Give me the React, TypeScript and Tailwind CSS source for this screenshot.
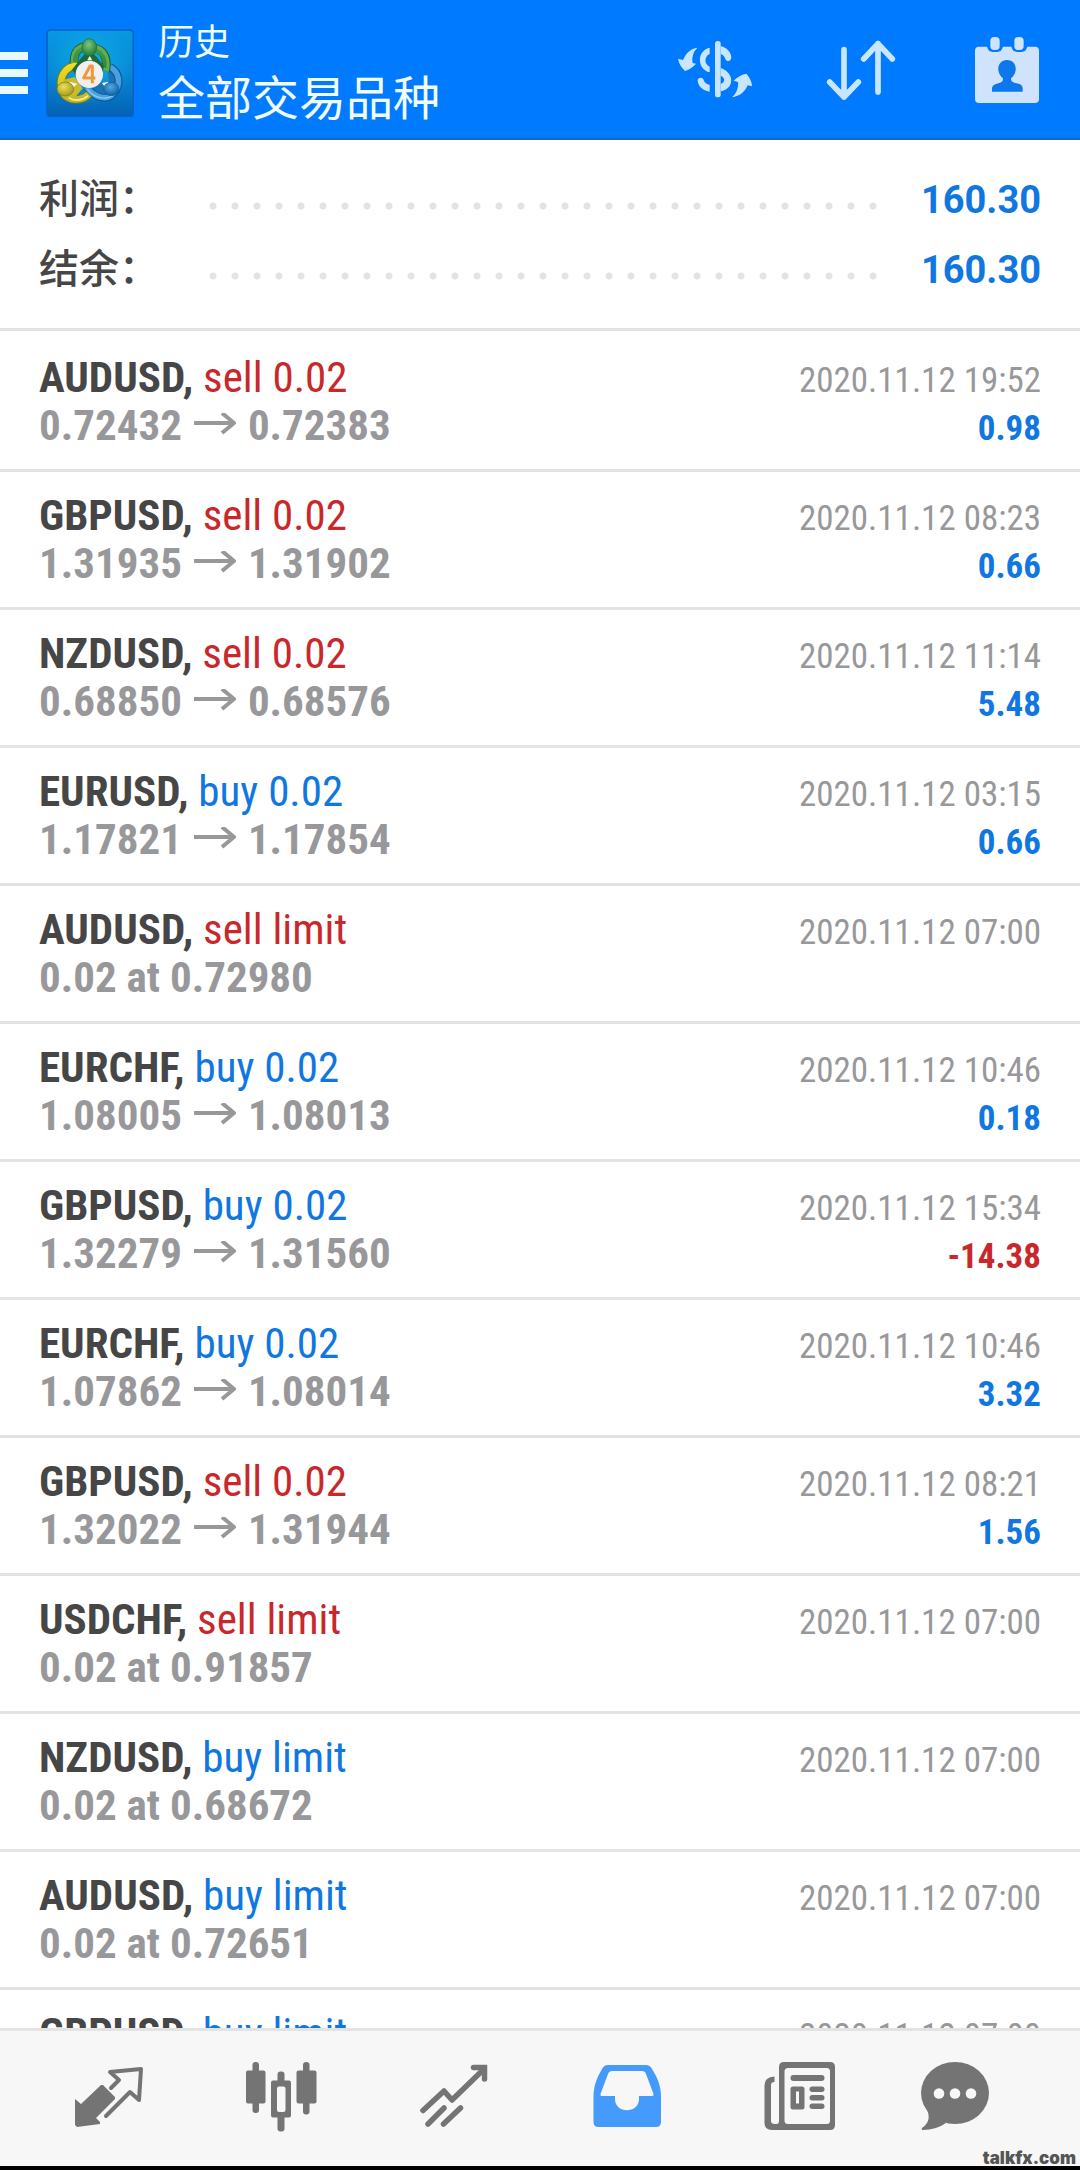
import React from 'react';

interface Deal {
  symbol: string;
  side: 'buy' | 'sell';
  volume: string;
  from?: string;
  to?: string;
  detail?: string;
  time: string;
  profit?: string;
}

const deals: Deal[] = [
  { symbol: 'AUDUSD', side: 'sell', volume: '0.02', from: '0.72432', to: '0.72383', time: '2020.11.12 19:52', profit: '0.98' },
  { symbol: 'GBPUSD', side: 'sell', volume: '0.02', from: '1.31935', to: '1.31902', time: '2020.11.12 08:23', profit: '0.66' },
  { symbol: 'NZDUSD', side: 'sell', volume: '0.02', from: '0.68850', to: '0.68576', time: '2020.11.12 11:14', profit: '5.48' },
  { symbol: 'EURUSD', side: 'buy', volume: '0.02', from: '1.17821', to: '1.17854', time: '2020.11.12 03:15', profit: '0.66' },
  { symbol: 'AUDUSD', side: 'sell', volume: 'limit', detail: '0.02 at 0.72980', time: '2020.11.12 07:00' },
  { symbol: 'EURCHF', side: 'buy', volume: '0.02', from: '1.08005', to: '1.08013', time: '2020.11.12 10:46', profit: '0.18' },
  { symbol: 'GBPUSD', side: 'buy', volume: '0.02', from: '1.32279', to: '1.31560', time: '2020.11.12 15:34', profit: '-14.38' },
  { symbol: 'EURCHF', side: 'buy', volume: '0.02', from: '1.07862', to: '1.08014', time: '2020.11.12 10:46', profit: '3.32' },
  { symbol: 'GBPUSD', side: 'sell', volume: '0.02', from: '1.32022', to: '1.31944', time: '2020.11.12 08:21', profit: '1.56' },
  { symbol: 'USDCHF', side: 'sell', volume: 'limit', detail: '0.02 at 0.91857', time: '2020.11.12 07:00' },
  { symbol: 'NZDUSD', side: 'buy', volume: 'limit', detail: '0.02 at 0.68672', time: '2020.11.12 07:00' },
  { symbol: 'AUDUSD', side: 'buy', volume: 'limit', detail: '0.02 at 0.72651', time: '2020.11.12 07:00' },
  { symbol: 'GBPUSD', side: 'buy', volume: 'limit', time: '2020.11.12 07:00' },
];

const summary = [
  { label: '利润', value: '160.30' },
  { label: '结余', value: '160.30' },
];

function Logo() {
  return (
    <svg viewBox="138 84 264 264" className="h-22 w-22 shrink-0" aria-hidden="true">
      <defs>
        <linearGradient id="tile" x1="0" y1="0" x2="0" y2="1">
          <stop offset="0" stopColor="#0899e2" />
          <stop offset="0.5" stopColor="#0788d4" />
          <stop offset="1" stopColor="#0561b4" />
        </linearGradient>
        <radialGradient id="glow" cx="0.5" cy="0.4" r="0.5">
          <stop offset="0" stopColor="#12b4e8" stopOpacity="0.8" />
          <stop offset="1" stopColor="#12b4e8" stopOpacity="0" />
        </radialGradient>
        <linearGradient id="green" x1="0" y1="0" x2="0" y2="1">
          <stop offset="0" stopColor="#3f9a4c" />
          <stop offset="1" stopColor="#2c8b3a" />
        </linearGradient>
        <linearGradient id="yellow" x1="0" y1="0" x2="0" y2="1">
          <stop offset="0" stopColor="#f0dc20" />
          <stop offset="1" stopColor="#c3b52c" />
        </linearGradient>
        <radialGradient id="headGreen" cx="0.45" cy="0.35" r="0.6">
          <stop offset="0" stopColor="#7fc47e" />
          <stop offset="1" stopColor="#24843c" />
        </radialGradient>
        <radialGradient id="headYellow" cx="0.4" cy="0.35" r="0.65">
          <stop offset="0" stopColor="#ece05a" />
          <stop offset="1" stopColor="#a59a1c" />
        </radialGradient>
        <radialGradient id="headBlue" cx="0.45" cy="0.35" r="0.65">
          <stop offset="0" stopColor="#56a8e0" />
          <stop offset="1" stopColor="#0a62a8" />
        </radialGradient>
      </defs>
      <rect x="141" y="87" width="259" height="260" rx="11" fill="url(#tile)" stroke="#0862c4" strokeWidth="5" />
      <rect x="146" y="92" width="249" height="250" fill="url(#glow)" />
      <path d="M322 194c34 14 42 50 24 80-22 26-60 22-88-14l10-20 60 8z" fill="#1c74b4" />
      <path d="M330 198c30 16 34 54 10 80-18 20-54 16-80-20" fill="none" stroke="#075a9c" strokeWidth="24" />
      <path d="M330 198c30 16 34 54 10 80-18 20-54 16-80-20" fill="none" stroke="#4aa0dc" strokeWidth="17" />
      <path d="M262 264c20 28 56 36 82 16" fill="none" stroke="#8cc8ee" strokeWidth="4" />
      <path d="M236 192c-44 3-63 41-48 82 17 29 60 26 78 6" fill="none" stroke="#6f7a1e" strokeWidth="26" />
      <path d="M236 192c-44 3-63 41-48 82 17 29 60 26 78 6" fill="none" stroke="url(#yellow)" strokeWidth="20" />
      <path d="M206 290c18 12 44 8 58-6" fill="none" stroke="#f4ee9a" strokeWidth="5" />
      <path d="M222 186c-2-52 40-56 48-40 25-14 58 13 47 63" fill="none" stroke="#1c5d2e" strokeWidth="26" />
      <path d="M222 186c-2-52 40-56 48-40 25-14 58 13 47 63" fill="none" stroke="#62ad4e" strokeWidth="20" />
      <path d="M224 182c2-38 28-46 46-29 24-13 49 12 44 47" fill="none" stroke="url(#green)" strokeWidth="11" />
      <path d="M246 168l22-22 22 22 22 28-8 36h-70l-18-26z" fill="#1f6a36" />
      <path d="M190 236l34-8 24 34-22 26-24-6z" fill="#c9bb2a" />
      <path d="M262 178l7-14 8 14zM208 242l24 6-20 18zM306 246l20-4-10 18z" fill="#f4f8e6" />
      <ellipse cx="268" cy="139" rx="22" ry="26" fill="url(#headGreen)" stroke="#1c6a38" strokeWidth="2" />
      <ellipse cx="196" cy="264" rx="25" ry="21" fill="url(#headYellow)" stroke="#6f7a1e" strokeWidth="2" />
      <ellipse cx="334" cy="264" rx="23" ry="20" fill="url(#headBlue)" stroke="#075a9c" strokeWidth="2" />
      <circle cx="268" cy="220" r="41" fill="#f1eff0" />
      <path d="M277 247V195h-7l-19 36h35" fill="none" stroke="#f0983c" strokeWidth="9" strokeLinejoin="round" />
    </svg>
  );
}

function CurrencyIcon() {
  return (
    <svg viewBox="96 90 240 240" className="h-20 w-20" fill="#c8e6ff" aria-hidden="true">
      <rect x="225" y="126" width="17" height="169" rx="8" />
      <path d="M209 146v19c-17 7-17 31 0 38v17c-38-9-40-65 0-74z" />
      <path d="M242 142c18 3 31 17 32 33 0 13-14 15-18 5-2-7-6-12-14-15zM242 207c42 14 43 62 0 70zM242 230v25c14-5 14-19 0-25z" fillRule="evenodd" />
      <path d="M173 243c3-9 15-9 18 0 2 8 8 12 18 15v20c-22-3-36-18-36-35z" />
      <path d="M173 146c-14 10-18 32-15 46l10 2c-8 9-19 17-33 22-11-10-19-24-21-37l15 4c8-20 23-35 44-37z" />
      <path d="M276 295c13-11 20-29 18-46l-13-4c9-10 22-18 38-21 11 11 17 26 17 38l-13-3c-8 19-23 33-47 36z" />
    </svg>
  );
}

function SortIcon() {
  return (
    <svg viewBox="540 90 240 240" className="h-20 w-20" fill="none" stroke="#c8e6ff" strokeWidth="17" strokeLinecap="round" strokeLinejoin="round" aria-hidden="true">
      <path d="M612 152v142M569 249l43 45 43-45M714 279V134M671 180l43-46 43 46" />
    </svg>
  );
}

function CalendarIcon() {
  return (
    <svg viewBox="984 90 240 240" className="h-20 w-20" aria-hidden="true">
      <rect x="1005" y="143" width="192" height="169" rx="12" fill="#cfe3fd" />
      <rect x="1041" y="112" width="48" height="47" rx="18" fill="#007aff" />
      <rect x="1114" y="112" width="48" height="47" rx="18" fill="#007aff" />
      <rect x="1051" y="114" width="28" height="39" rx="12" fill="#cfe3fd" />
      <rect x="1123" y="114" width="28" height="39" rx="12" fill="#cfe3fd" />
      <path d="M1101 183c19 0 28 15 26 31-2 12-8 20-14 24 0 8 3 11 10 13 15 4 25 6 25 18v9h-92v-9c0-12 11-14 24-18 7-2 9-5 9-13-6-4-12-12-14-24-2-16 8-31 26-31z" fill="#0c78ec" />
    </svg>
  );
}

function QuotesIcon() {
  return (
    <svg viewBox="0 0 72 72" className="h-18 w-18" aria-hidden="true">
      <path d="M3 37l6 5 20-19h2l12 12v2L24 56l4 4v2L5 65l-2-2z" fill="#747474" />
      <path d="M39 26l8-8-9-8 31-3-2 31-9-8-24 24" fill="none" stroke="#747474" strokeWidth="4" strokeLinejoin="round" strokeLinecap="round" />
    </svg>
  );
}

function ChartIcon() {
  return (
    <svg viewBox="0 0 72 72" className="h-18 w-18" fill="#747474" aria-hidden="true">
      <rect x="7.5" y="0" width="6.5" height="51" rx="3" />
      <rect x="1" y="8.5" width="19.5" height="33" rx="2" />
      <rect x="58" y="0" width="6.5" height="52.5" rx="3" />
      <rect x="51.5" y="8.5" width="20" height="33" rx="2" />
      <rect x="32.5" y="9.5" width="7" height="60" rx="3" />
      <rect x="26" y="18.5" width="20" height="37" rx="2" />
      <rect x="32" y="24.5" width="8.5" height="25.5" rx="2" fill="#f7f7f7" />
    </svg>
  );
}

function TradeIcon() {
  return (
    <svg viewBox="0 0 72 72" className="h-18 w-18" fill="none" stroke="#747474" strokeWidth="5.5" strokeLinecap="round" aria-hidden="true">
      <path d="M5 48.5L26 29l8 9L66 7M10 62l16-16M25.5 62l17-16" strokeLinejoin="round" />
      <path d="M55.5 5.5h11V17" />
    </svg>
  );
}

function HistoryIcon() {
  return (
    <svg viewBox="0 0 72 72" className="h-18 w-18" fill="#459bfc" aria-hidden="true">
      <path fillRule="evenodd" d="M17 3h38q4 0 6 4c6 9 9 18 9 28v25q0 5-5 5H7.5q-5 0-5-5V35c0-10 3-19 8.5-28q2-4 6-4zM21 9q-3 0-4 3L9.5 32q-.5 2 2 2H24v3c0 15 24 15 24 0v-3h13q2 0 1.500-2L55 12q-1-3-4-3z" />
    </svg>
  );
}

function NewsIcon() {
  return (
    <svg viewBox="0 0 72 72" className="h-18 w-18" fill="#747474" aria-hidden="true">
      <path fillRule="evenodd" d="M20 0h46q5 0 5 5v58q0 5-5 5H8q-7.5 0-7.5-7V23q0-8 10-8.500v5.500q-3.500 0-3.500 3v36q0 3 4 3h1.500q2.500 0 2.500-3V5q0-5 5-5zM24 6q-3.500 0-3.500 3.500v49q0 3.500 3.500 3.500h39q3 0 3-3.500v-49q0-3.500-3-3.500z" />
      <rect x="26.5" y="13" width="34" height="6" rx="3" />
      <path fillRule="evenodd" d="M29 24.500h9q2.500 0 2.500 2.500v18q0 2.500-2.500 2.500h-9q-2.500 0-2.500-2.500V27q0-2.500 2.500-2.500zM32 29.500v12h3v-12z" />
      <rect x="45.5" y="24.5" width="15" height="5.5" rx="2.75" />
      <rect x="45.5" y="33" width="15" height="5.5" rx="2.75" />
      <rect x="45.5" y="41.5" width="15" height="5.5" rx="2.75" />
    </svg>
  );
}

function ChatIcon() {
  return (
    <svg viewBox="0 0 72 72" className="h-18 w-18" fill="#747474" aria-hidden="true">
      <ellipse cx="36" cy="31" rx="34" ry="31" />
      <path d="M8 48q5 11-5 18-1 2 1 2 13 0 23-7z" />
      <g fill="#f7f7f7">
        <circle cx="20" cy="31.5" r="5.3" />
        <circle cx="36" cy="31.5" r="5.3" />
        <circle cx="52" cy="31.5" r="5.3" />
      </g>
    </svg>
  );
}

function PriceArrow() {
  return (
    <svg viewBox="0 0 44 24" className="h-6 w-11" fill="none" stroke="#98989b" strokeWidth="4" strokeLinejoin="round" role="img" aria-label="→">
      <path d="M1 10h40M29 0l12 10-12 10" />
    </svg>
  );
}

const tabs = [
  { name: 'Quotes', icon: <QuotesIcon /> },
  { name: 'Chart', icon: <ChartIcon /> },
  { name: 'Trade', icon: <TradeIcon /> },
  { name: 'History', icon: <HistoryIcon /> },
  { name: 'News', icon: <NewsIcon /> },
];

function DealRow({ deal }: { deal: Deal }) {
  return (
    <li className="flex h-[138px] shrink-0 justify-between border-b-3 border-[#e3e3e3] px-[39px] pt-[19px] font-['Roboto_Condensed','Liberation_Sans_Narrow',Roboto,sans-serif]">
      <div className="text-[43px] leading-12 whitespace-nowrap">
        <p>
          <span className="font-bold text-[#464646]">{deal.symbol},</span>{' '}
          <span className={deal.side === 'sell' ? 'text-[#c8282c]' : 'text-[#1177e0]'}>{deal.side} {deal.volume}</span>
        </p>
        {deal.detail && <p className="font-bold text-[#98989b]">{deal.detail}</p>}
        {deal.from && (
          <p className="flex items-center gap-[11px] font-bold text-[#98989b]">{deal.from}<PriceArrow />{deal.to}</p>
        )}
      </div>
      <div className="pt-1 text-right text-[35px] leading-12 whitespace-nowrap">
        <p className="text-[#98989b]">{deal.time}</p>
        {deal.profit && (
          <p className={deal.profit.startsWith('-') ? 'font-bold text-[#c8282c]' : 'font-bold text-[#1177e0]'}>{deal.profit}</p>
        )}
      </div>
    </li>
  );
}

export default function App() {
  return (
    <div className="relative flex h-screen flex-col overflow-hidden bg-white font-[Roboto,'Noto_Sans_CJK_SC',sans-serif]">
      <header className="flex h-[140px] shrink-0 items-center border-b-2 border-[#1668c8] bg-[#007aff] pt-1 pr-8 text-[#f0fcff]">
        <button aria-label="Menu" className="mt-1 mr-[18px] flex flex-col gap-[9px]">
          <span className="h-2 w-7 bg-[#e8f8ff]" />
          <span className="h-2 w-7 bg-[#e8f8ff]" />
          <span className="h-2 w-7 bg-[#e8f8ff]" />
        </button>
        <span className="pt-1"><Logo /></span>
        <div className="ml-6 flex-1 pt-2 whitespace-nowrap">
          <p className="text-[36px] leading-12">历史</p>
          <h1 className="text-[47px] leading-16">全部交易品种</h1>
        </div>
        <div className="flex gap-17 pb-1">
          <button aria-label="Symbols"><CurrencyIcon /></button>
          <button aria-label="Sort"><SortIcon /></button>
          <button aria-label="Period"><CalendarIcon /></button>
        </div>
      </header>

      <main className="flex min-h-0 flex-1 flex-col overflow-hidden">
        <dl className="flex h-[191px] shrink-0 flex-col border-b-3 border-[#e3e3e3] px-[39px] pt-[25px]">
          {summary.map(row => (
            <div key={row.label} className="flex h-[70px] items-center">
              <dt className="text-[40px] font-medium text-[#464646]">{row.label}：</dt>
              <dd className="flex flex-1 items-center">
                <span className="mt-3 mr-10 ml-[43px] h-2 flex-1 bg-[radial-gradient(circle,#e3e3e3_3px,transparent_4px)] bg-[size:22px_8px]" />
                <span className="text-[38px] font-bold text-[#1177e0]">{row.value}</span>
              </dd>
            </div>
          ))}
        </dl>
        <ul className="flex flex-col pt-[3px]">
          {deals.map((deal, i) => <DealRow key={i} deal={deal} />)}
        </ul>
      </main>

      <nav className="flex h-[142px] shrink-0 items-center border-t-3 border-b-4 border-t-[#e3e3e3] border-b-black bg-[#f7f7f7] px-[21px] pb-[2px]">
        {tabs.map(tab => (
          <button key={tab.name} aria-label={tab.name} className="flex flex-1 justify-center">{tab.icon}</button>
        ))}
        <button aria-label="Messages" className="flex flex-1 justify-center">
          <span className="pr-9"><ChatIcon /></span>
        </button>
      </nav>
      <span className="absolute right-1 bottom-1 font-[Inter,sans-serif] text-[17px] leading-4 font-black text-[#555]">talkfx.com</span>
    </div>
  );
}
